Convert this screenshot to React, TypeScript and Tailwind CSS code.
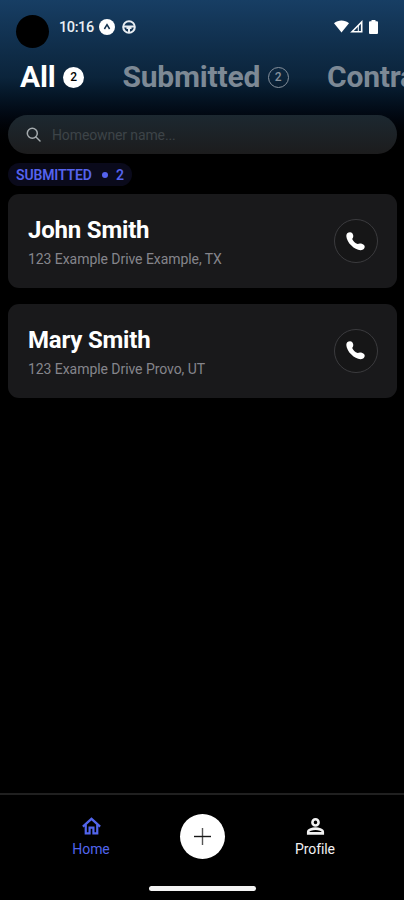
const leads = [
  { name: "John Smith", address: "123 Example Drive Example, TX" },
  { name: "Mary Smith", address: "123 Example Drive Provo, UT" },
];

function StatusBar() {
  return (
    <div className="flex h-[60px] items-start pl-4 pr-[26px] pt-[15px]">
      <div className="size-[33px] rounded-full bg-black" />
      <div className="ml-[10px] flex h-[23px] items-center">
        <span className="w-[40px] whitespace-nowrap pt-[2px] text-[14.5px] font-medium tracking-[-0.4px] text-[#e9eef3]">10:16</span>
        <svg className="size-4" viewBox="0 0 16 16">
          <circle cx="8" cy="8" r="8" fill="white" />
          <path d="M5.4 10 8 5.6l2.6 4.4" fill="none" stroke="#12304d" strokeWidth="1.5" />
        </svg>
        <svg className="ml-[7px] size-[14px]" viewBox="0 0 14 14" fill="none" stroke="#e8edf2" strokeWidth="2">
          <circle cx="7" cy="7" r="5.8" />
          <path d="M1.5 6.5h11M7 8v5" />
          <path d="M4.5 6h5v3h-5z" fill="#e8edf2" stroke="none" />
        </svg>
      </div>
      <div className="ml-auto flex h-[23px] items-center">
        <svg className="h-[13px] w-[15px]" viewBox="0 0 15 13">
          <path d="M0 3.2C4.2-.5 10.8-.5 15 3.2L7.5 12.5z" fill="white" />
        </svg>
        <svg className="ml-[1px] size-[13px]" viewBox="0 0 13 13">
          <path d="M2 11.7 11.7 2v9.7z" fill="none" stroke="white" strokeWidth="1.6" />
          <path d="M8.3 5.5V12" stroke="white" strokeWidth="1" />
        </svg>
        <svg className="ml-[6px] h-[14px] w-[9px]" viewBox="0 0 9 14">
          <path d="M2.5 0h4v1.2H8a1 1 0 0 1 1 1V13a1 1 0 0 1-1 1H1a1 1 0 0 1-1-1V2.2a1 1 0 0 1 1-1h1.5z" fill="white" />
        </svg>
      </div>
    </div>
  );
}

function Tabs() {
  return (
    <div className="flex h-[34px] items-center overflow-hidden whitespace-nowrap pl-5 text-[30px] font-bold leading-[34px] tracking-[-0.2px]">
      <span className="w-[43px] shrink-0">All</span>
      <span className="flex size-[21px] shrink-0 items-center justify-center rounded-full bg-white text-xs font-medium leading-none text-black">
        2
      </span>
      <span className="ml-[38.5px] w-[145px] shrink-0 text-[#7d8995]">Submitted</span>
      <span className="flex size-[21px] shrink-0 items-center justify-center rounded-full border-[1.5px] border-[#87919c] text-xs font-medium leading-none text-[#87919c]">
        2
      </span>
      <span className="ml-[38.5px] shrink-0 text-[#7d8995]">Contracted</span>
    </div>
  );
}

function SearchBar() {
  return (
    <div className="ml-2 mr-[7px] mt-[21px] flex h-[39px] items-center rounded-full bg-linear-to-b from-[#1c2830] to-[#1c1c1d] pl-[18px]">
      <svg className="size-[15px]" viewBox="0 0 15 15" fill="none" stroke="#a5abae" strokeWidth="1.5" strokeLinecap="round">
        <circle cx="6.3" cy="6.2" r="5" />
        <path d="m10 10 4 4" />
      </svg>
      <span className="ml-[11px] pt-[2px] text-[14px] tracking-[-0.12px] text-[#3d4448]">Homeowner name...</span>
    </div>
  );
}

function LeadCard({ name, address }: { name: string; address: string }) {
  return (
    <div className="flex h-[94px] items-center rounded-[11px] bg-[#19191b] pl-5 pr-[19px]">
      <div className="flex-1 pt-[4px]">
        <div className="text-[24px] font-bold leading-[30px] tracking-[-0.2px]">{name}</div>
        <div className="mt-[2px] text-[14px] leading-6 tracking-[-0.06px] text-[#85858b]">{address}</div>
      </div>
      <div className="flex size-11 items-center justify-center rounded-full border border-[#3b3b3e] bg-[#161617] pr-px">
        <svg className="size-[19px]" viewBox="0 0 19 19" fill="white">
          <path d="M1.2 1.3C2.7.1 5.2-.2 6.3 1.3c1.4 1.9 1.3 4-.1 5.7.9 2.2 2.8 4.2 5.5 5 1.9-1 5-.5 6.5 1.2 1 1.3.4 3.5-1.1 4.4-3.1 1.9-8.3-.4-11.7-4C1.4 9.7-1.1 3.8 1.2 1.3z" />
        </svg>
      </div>
    </div>
  );
}

function BottomNav() {
  return (
    <div className="flex h-[107px] flex-col border-t-2 border-[#202020] bg-black">
      <div className="flex h-[91px] items-start">
        <div className="ml-[61px] flex w-[60px] flex-col items-center pt-5 text-[#5265ed]">
          <svg className="size-[23px]" viewBox="0 0 24 24" fill="none" stroke="currentColor" strokeWidth="2.3">
            <path d="M3 12.1 12 4l9 8.1" />
            <path d="M6 10v9.2h4v-6h4v6h4V10" />
          </svg>
          <span className="mt-[1px] text-[14px] leading-5 tracking-[-0.1px]">Home</span>
        </div>
        <div className="ml-[59px] mt-[19px] flex size-[45px] items-center justify-center rounded-full bg-white">
          <svg className="size-[17px]" viewBox="0 0 17 17" strokeWidth="1.4">
            <path d="M8.5 0v17" stroke="#555555" />
            <path d="M0 8.5h17" stroke="#171717" />
          </svg>
        </div>
        <div className="ml-[60px] flex w-[60px] flex-col items-center pt-5 text-[#f1f1f1]">
          <svg className="size-[23px]" viewBox="0 0 24 24" fill="none" stroke="currentColor" strokeWidth="2.7">
            <circle cx="12" cy="7.7" r="3.2" />
            <path d="M4.4 19.2v-1.7c0-2.1 4.500-3.3 7.6-3.3s7.6 1.2 7.6 3.3v1.7z" />
          </svg>
          <span className="mt-[1px] text-[14px] leading-5 tracking-[-0.1px]">Profile</span>
        </div>
      </div>
      <div className="mx-auto h-[5px] w-[107px] rounded-full bg-[#f4f4f4]" />
    </div>
  );
}

export default function App() {
  return (
    <div className="flex h-[900px] w-[404px] flex-col overflow-hidden bg-black font-['Roboto',sans-serif] text-white">
      <div className="h-[155px] bg-linear-to-b from-[#173e64] via-[#0b243b] via-50% to-black">
        <StatusBar />
        <Tabs />
        <SearchBar />
      </div>
      <main className="flex-1 pl-2 pr-[7px] pt-2">
        <div className="flex h-[23px] w-[124px] items-center rounded-full bg-[#0a0a1b] pl-2 text-[14px] font-semibold text-[#5563ee]">
          <span className="w-[86px] pt-px tracking-[-0.15px]">SUBMITTED</span>
          <span className="size-[6px] rounded-full bg-[#5563ee]" />
          <span className="ml-2 pt-px">2</span>
        </div>
        <div className="mt-2 flex flex-col gap-[15.5px]">
          {leads.map((lead) => (
            <LeadCard key={lead.name} {...lead} />
          ))}
        </div>
      </main>
      <BottomNav />
    </div>
  );
}
